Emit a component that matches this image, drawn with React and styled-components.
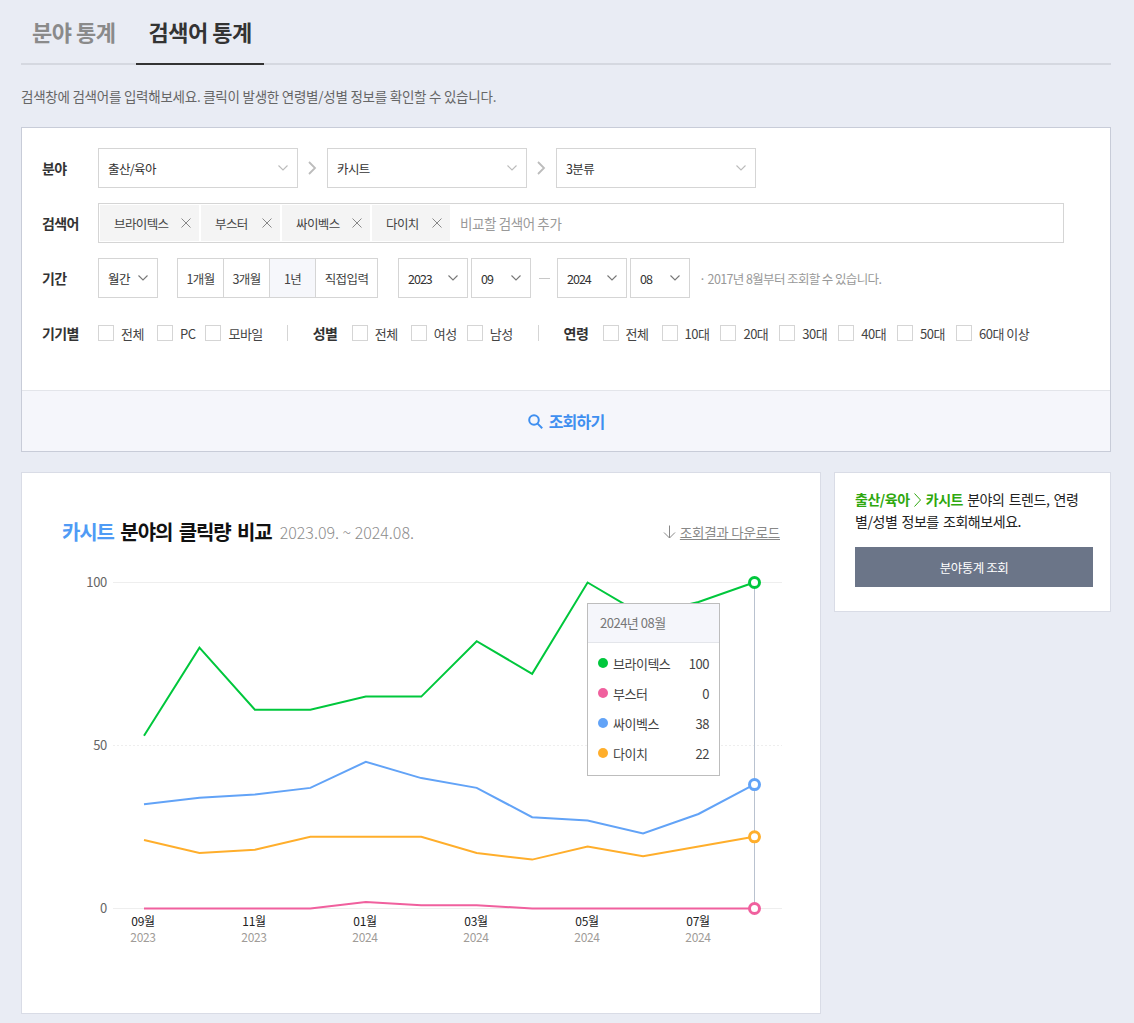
import React from 'react';
import styled, { createGlobalStyle } from 'styled-components';

const GlobalStyle = createGlobalStyle`
    * { box-sizing: border-box; }
    body {
        margin: 0;
        background: #e9ecf4;
        font-family: "Noto Sans CJK KR", "Noto Sans", sans-serif;
        color: #333;
    }
`;

const Page = styled.div`
    padding: 0 23px 9px 21px;
`;

const TabBar = styled.div`
    display: flex;
    height: 65px;
    border-bottom: 2px solid #d5d8e0;
`;

const Tab = styled.div`
    height: 65px;
    padding: 0 12px;
    margin-left: ${p => (p.$active ? '9px' : '-1px')};
    font-size: 22px;
    font-weight: 700;
    line-height: 63px;
    letter-spacing: -0.5px;
    color: ${p => (p.$active ? '#333' : '#8a8a8a')};
    border-bottom: 2px solid ${p => (p.$active ? '#333' : 'transparent')};
`;

const Desc = styled.p`
    margin: 21px 0;
    font-size: 13.5px;
    line-height: 20px;
    letter-spacing: -0.25px;
    color: #666;
`;

const Panel = styled.section`
    background: #fff;
    border: 1px solid #c8ccd8;
`;

const PanelBody = styled.div`
    display: flex;
    flex-direction: column;
    gap: 15px;
    padding: 20px 20px 37px;
`;

const Row = styled.div`
    display: flex;
    align-items: center;
    height: 40px;
`;

const Label = styled.div`
    width: 56px;
    flex: none;
    font-size: 14px;
    font-weight: 700;
    letter-spacing: -0.6px;
    color: #333;
`;

const SelectBox = styled.div`
    display: flex;
    align-items: center;
    justify-content: space-between;
    width: ${p => p.$w}px;
    height: 40px;
    margin-right: ${p => p.$mr || 0}px;
    padding: 0 9px;
    background: #fff;
    border: 1px solid #d5d5d5;
    font-size: 12.5px;
    letter-spacing: ${p => (p.$num ? '-1px' : '-0.6px')};
    color: #333;
`;

const Chevron = styled.svg`
    width: 10px;
    height: 6px;
    fill: none;
    stroke: ${p => (p.$light ? '#bbb' : '#777')};
    stroke-width: 1.1;
`;

const Sep = styled.svg`
    width: 9px;
    height: 14px;
    margin: 0 10px;
    fill: none;
    stroke: #bcbcbc;
    stroke-width: 1.8;
`;

const KeywordBox = styled.div`
    display: flex;
    align-items: center;
    gap: 2px;
    width: 966px;
    height: 40px;
    padding: 0 1px;
    border: 1px solid #d5d5d5;
`;

const Keyword = styled.div`
    display: flex;
    align-items: center;
    justify-content: space-between;
    width: ${p => p.$w}px;
    height: 36px;
    padding: 0 8px 0 14px;
    background: #f4f4f4;
    font-size: 12.5px;
    letter-spacing: -0.6px;
    color: #444;
`;

const CloseIcon = styled.svg`
    width: 10px;
    height: 10px;
    fill: none;
    stroke: #888;
    stroke-width: 1;
`;

const Placeholder = styled.div`
    margin-left: 8px;
    font-size: 13.5px;
    letter-spacing: -0.4px;
    color: #999;
`;

const PeriodGroup = styled.div`
    display: flex;
    height: 40px;
    margin: 0 20px 0 19px;
    border: 1px solid #d5d5d5;
`;

const PeriodBtn = styled.div`
    display: flex;
    align-items: center;
    justify-content: center;
    width: ${p => p.$w}px;
    background: ${p => (p.$on ? '#f6f7fb' : '#fff')};
    border-left: ${p => (p.$first ? 'none' : '1px solid #d5d5d5')};
    font-size: 12.5px;
    letter-spacing: -0.6px;
    color: #444;
`;

const Dash = styled.div`
    width: 11px;
    height: 1px;
    margin: 0 7px 0 8px;
    background: #c8c8c8;
`;

const Note = styled.div`
    margin-left: 9px;
    font-size: 12.5px;
    letter-spacing: -0.62px;
    color: #999;
`;

const CheckItem = styled.label`
    display: flex;
    align-items: center;
    gap: 7px;
    margin-right: ${p => p.$mr}px;
    font-size: 13px;
    letter-spacing: -0.5px;
    color: #444;
`;

const Box = styled.span`
    width: 16px;
    height: 16px;
    background: #fff;
    border: 1px solid #d5d5d5;
`;

const Divider = styled.div`
    width: 1px;
    height: 16px;
    margin: 0 25px 0 ${p => p.$ml}px;
    background: #d5d5d5;
`;

const GroupLabel = styled(Label)`
    width: 39px;
`;

const PanelFooter = styled.div`
    display: flex;
    align-items: center;
    justify-content: center;
    gap: 6px;
    height: 61px;
    background: #f5f6fb;
    border-top: 1px solid #e3e5ea;
    font-size: 16px;
    font-weight: 700;
    letter-spacing: -0.8px;
    color: #3f8ff0;
`;

const Cards = styled.div`
    display: flex;
    align-items: flex-start;
    gap: 13px;
    margin-top: 20px;
`;

const ChartCard = styled.section`
    width: 800px;
    height: 542px;
    background: #fff;
    border: 1px solid #d9dce6;
`;

const ChartHead = styled.div`
    display: flex;
    align-items: center;
    height: 28px;
    margin-top: 44px;
    padding: 0 40px;
`;

const Title = styled.h2`
    margin: 0;
    font-size: 20px;
    font-weight: 700;
    letter-spacing: -1.1px;
    word-spacing: 3px;
    color: #111;

    em {
        font-style: normal;
        color: #4f9bf5;
    }
`;

const Range = styled.span`
    margin-left: 8px;
    padding-top: 2px;
    font-size: 16px;
    font-weight: 300;
    color: #8c8c8c;
`;

const Download = styled.a`
    display: flex;
    align-items: center;
    gap: 4px;
    margin-left: auto;
    padding-top: 2px;
    font-size: 13.5px;
    letter-spacing: -0.25px;
    color: #888;

    span {
        text-decoration: underline;
    }
`;

const ChartArea = styled.div`
    position: relative;
    margin-top: 15px;
    height: 400px;
`;

const Plot = styled.svg`
    display: block;
    width: 798px;
    height: 400px;
`;

const AxisText = styled.text`
    font-family: "Noto Sans CJK KR", "Noto Sans", sans-serif;
    font-size: ${p => p.$size || 12}px;
    fill: ${p => p.$color || '#666'};
    letter-spacing: -0.3px;
`;

const Tooltip = styled.div`
    position: absolute;
    left: 565px;
    top: 43px;
    width: 133px;
    height: 173px;
    background: #fff;
    border: 1px solid #bdbdbd;
`;

const TooltipHead = styled.div`
    height: 39px;
    padding-left: 12px;
    background: #f5f6fb;
    border-bottom: 1px solid #e3e5ea;
    font-size: 13px;
    line-height: 38px;
    letter-spacing: -0.5px;
    color: #777;
`;

const TooltipList = styled.div`
    padding-top: 5px;
`;

const TooltipRow = styled.div`
    display: flex;
    align-items: center;
    height: 30px;
    padding: 0 10px;
    font-size: 13px;
    letter-spacing: -0.5px;
    color: #444;

    b {
        margin-left: auto;
        font-weight: 400;
    }
`;

const Dot = styled.i`
    width: 10px;
    height: 10px;
    margin-right: 5px;
    border-radius: 50%;
    background: ${p => p.$color};
`;

const SideCard = styled.aside`
    flex: 1;
    height: 140px;
    padding: 15px 17px 0 20px;
    background: #fff;
    border: 1px solid #d9dce6;
`;

const SideText = styled.p`
    margin: 0;
    padding-right: 5px;
    font-size: 14px;
    line-height: 22px;
    letter-spacing: -0.45px;
    word-spacing: 1.5px;
    color: #222;

    strong {
        font-weight: 700;
        color: #2fa80f;
    }
`;

const SideArrow = styled.svg`
    width: 7px;
    height: 14px;
    margin: 0 5px 0 4px;
    vertical-align: -2px;
    fill: none;
    stroke: #2fa80f;
    stroke-width: 1;
`;

const SideButton = styled.div`
    display: flex;
    align-items: center;
    justify-content: center;
    height: 40px;
    margin-top: 15px;
    background: #6b7588;
    font-size: 12.5px;
    letter-spacing: -0.5px;
    color: #fff;
`;

const Down = ({ light }) => (
    <Chevron $light={light} viewBox="0 0 10 6"><path d="M.5.5L5 5 9.5.5" /></Chevron>
);

const Close = () => (
    <CloseIcon viewBox="0 0 10 10"><path d="M.5.5l9 9M9.5.5l-9 9" /></CloseIcon>
);

const Arrow = () => (
    <Sep viewBox="0 0 9 14"><path d="M1 1l6 6-6 6" /></Sep>
);

const keywords = [
    { name: '브라이텍스', w: 99 },
    { name: '부스터', w: 79 },
    { name: '싸이벡스', w: 88 },
    { name: '다이치', w: 78 },
];

const periods = [
    { name: '1개월', w: 45 },
    { name: '3개월', w: 46 },
    { name: '1년', w: 46, on: true },
    { name: '직접입력', w: 62 },
];

const devices = [['전체', 13], ['PC', 10], ['모바일', 0]];
const genders = [['전체', 13], ['여성', 10], ['남성', 0]];
const ages = [['전체', 13], ['10대', 11], ['20대', 11], ['30대', 11], ['40대', 11], ['50대', 11], ['60대 이상', 0]];

const series = [
    { name: '브라이텍스', color: '#00c73c', last: 100, values: [53, 80, 61, 61, 65, 65, 82, 72, 100, 90, 94, 100] },
    { name: '부스터', color: '#f0609e', last: 0, values: [0, 0, 0, 0, 2, 1, 1, 0, 0, 0, 0, 0] },
    { name: '싸이벡스', color: '#62a3f7', last: 38, values: [32, 34, 35, 37, 45, 40, 37, 28, 27, 23, 29, 38] },
    { name: '다이치', color: '#ffae2b', last: 22, values: [21, 17, 18, 22, 22, 22, 17, 15, 19, 16, 19, 22] },
];

const ticks = [
    { x: 143, month: '09월', year: '2023' },
    { x: 254, month: '11월', year: '2023' },
    { x: 365, month: '01월', year: '2024' },
    { x: 476, month: '03월', year: '2024' },
    { x: 587, month: '05월', year: '2024' },
    { x: 698, month: '07월', year: '2024' },
];

const xAt = i => 144 + i * 55.45;
const yAt = v => 908.5 - v * 3.26;

const Checks = ({ items }) => items.map(([name, mr]) => (
    <CheckItem key={name} $mr={mr}><Box />{name}</CheckItem>
));

const Chart = () => (
    <Plot viewBox="22 560 798 400">
        <path d="M113 582.5H782" stroke="#eeeeee" />
        <path d="M113 745.5H782" stroke="#eeeeee" strokeDasharray="2 2" />
        <path d="M113 908.5H782" stroke="#eeeeee" />
        <AxisText x="107" y="587" textAnchor="end" $size={13}>100</AxisText>
        <AxisText x="107" y="750" textAnchor="end" $size={13}>50</AxisText>
        <AxisText x="107" y="913" textAnchor="end" $size={13}>0</AxisText>
        <path d="M754.5 582V908" stroke="#b9c2cf" />
        {series.map(s => (
            <polyline
                key={s.name}
                points={s.values.map((v, i) => `${xAt(i)},${yAt(v)}`).join(' ')}
                fill="none"
                stroke={s.color}
                strokeWidth="2"
            />
        ))}
        {series.map(s => (
            <circle key={s.name} cx="754.5" cy={yAt(s.last)} r="5" fill="#fff" stroke={s.color} strokeWidth="3" />
        ))}
        {ticks.map(t => (
            <g key={t.x}>
                <AxisText x={t.x} y="926" textAnchor="middle" $color="#222">{t.month}</AxisText>
                <AxisText x={t.x} y="942" textAnchor="middle" $color="#a09c98">{t.year}</AxisText>
            </g>
        ))}
    </Plot>
);

export default function App() {
    return (
        <Page>
            <GlobalStyle />
            <TabBar>
                <Tab>분야 통계</Tab>
                <Tab $active>검색어 통계</Tab>
            </TabBar>
            <Desc>검색창에 검색어를 입력해보세요. 클릭이 발생한 연령별/성별 정보를 확인할 수 있습니다.</Desc>

            <Panel>
                <PanelBody>
                    <Row>
                        <Label>분야</Label>
                        <SelectBox $w={200}>출산/육아<Down light /></SelectBox>
                        <Arrow />
                        <SelectBox $w={200}>카시트<Down light /></SelectBox>
                        <Arrow />
                        <SelectBox $w={200}>3분류<Down light /></SelectBox>
                    </Row>
                    <Row>
                        <Label>검색어</Label>
                        <KeywordBox>
                            {keywords.map(k => (
                                <Keyword key={k.name} $w={k.w}>{k.name}<Close /></Keyword>
                            ))}
                            <Placeholder>비교할 검색어 추가</Placeholder>
                        </KeywordBox>
                    </Row>
                    <Row>
                        <Label>기간</Label>
                        <SelectBox $w={60}>월간<Down /></SelectBox>
                        <PeriodGroup>
                            {periods.map((p, i) => (
                                <PeriodBtn key={p.name} $w={p.w} $on={p.on} $first={i === 0}>{p.name}</PeriodBtn>
                            ))}
                        </PeriodGroup>
                        <SelectBox $w={70} $mr={3} $num>2023<Down /></SelectBox>
                        <SelectBox $w={60} $num>09<Down /></SelectBox>
                        <Dash />
                        <SelectBox $w={70} $mr={3} $num>2024<Down /></SelectBox>
                        <SelectBox $w={60} $num>08<Down /></SelectBox>
                        <Note>· 2017년 8월부터 조회할 수 있습니다.</Note>
                    </Row>
                    <Row>
                        <Label>기기별</Label>
                        <Checks items={devices} />
                        <Divider $ml={24} />
                        <GroupLabel>성별</GroupLabel>
                        <Checks items={genders} />
                        <Divider $ml={25} />
                        <GroupLabel>연령</GroupLabel>
                        <Checks items={ages} />
                    </Row>
                </PanelBody>
                <PanelFooter>
                    <svg width="15" height="15" viewBox="0 0 15 15" fill="none" stroke="#3f8ff0" strokeWidth="2">
                        <circle cx="6" cy="6" r="4.8" />
                        <path d="M9.6 9.6l4.6 4.6" />
                    </svg>
                    조회하기
                </PanelFooter>
            </Panel>

            <Cards>
                <ChartCard>
                    <ChartHead>
                        <Title><em>카시트</em> 분야의 클릭량 비교</Title>
                        <Range>2023.09. ~ 2024.08.</Range>
                        <Download>
                            <svg width="13" height="14" viewBox="0 0 13 14" fill="none" stroke="#888" strokeWidth="1">
                                <path d="M6.5 0.5V13M1 7.5l5.5 5.5L12 7.5" />
                            </svg>
                            <span>조회결과 다운로드</span>
                        </Download>
                    </ChartHead>
                    <ChartArea>
                        <Chart />
                        <Tooltip>
                            <TooltipHead>2024년 08월</TooltipHead>
                            <TooltipList>
                                {series.map(s => (
                                    <TooltipRow key={s.name}>
                                        <Dot $color={s.color} />
                                        {s.name}
                                        <b>{s.last}</b>
                                    </TooltipRow>
                                ))}
                            </TooltipList>
                        </Tooltip>
                    </ChartArea>
                </ChartCard>

                <SideCard>
                    <SideText>
                        <strong>출산/육아<SideArrow viewBox="0 0 7 14"><path d="M.5.5L6.5 7l-6 6.5" /></SideArrow>카시트</strong> 분야의 트렌드, 연령별/성별 정보를 조회해보세요.
                    </SideText>
                    <SideButton>분야통계 조회</SideButton>
                </SideCard>
            </Cards>
        </Page>
    );
}
